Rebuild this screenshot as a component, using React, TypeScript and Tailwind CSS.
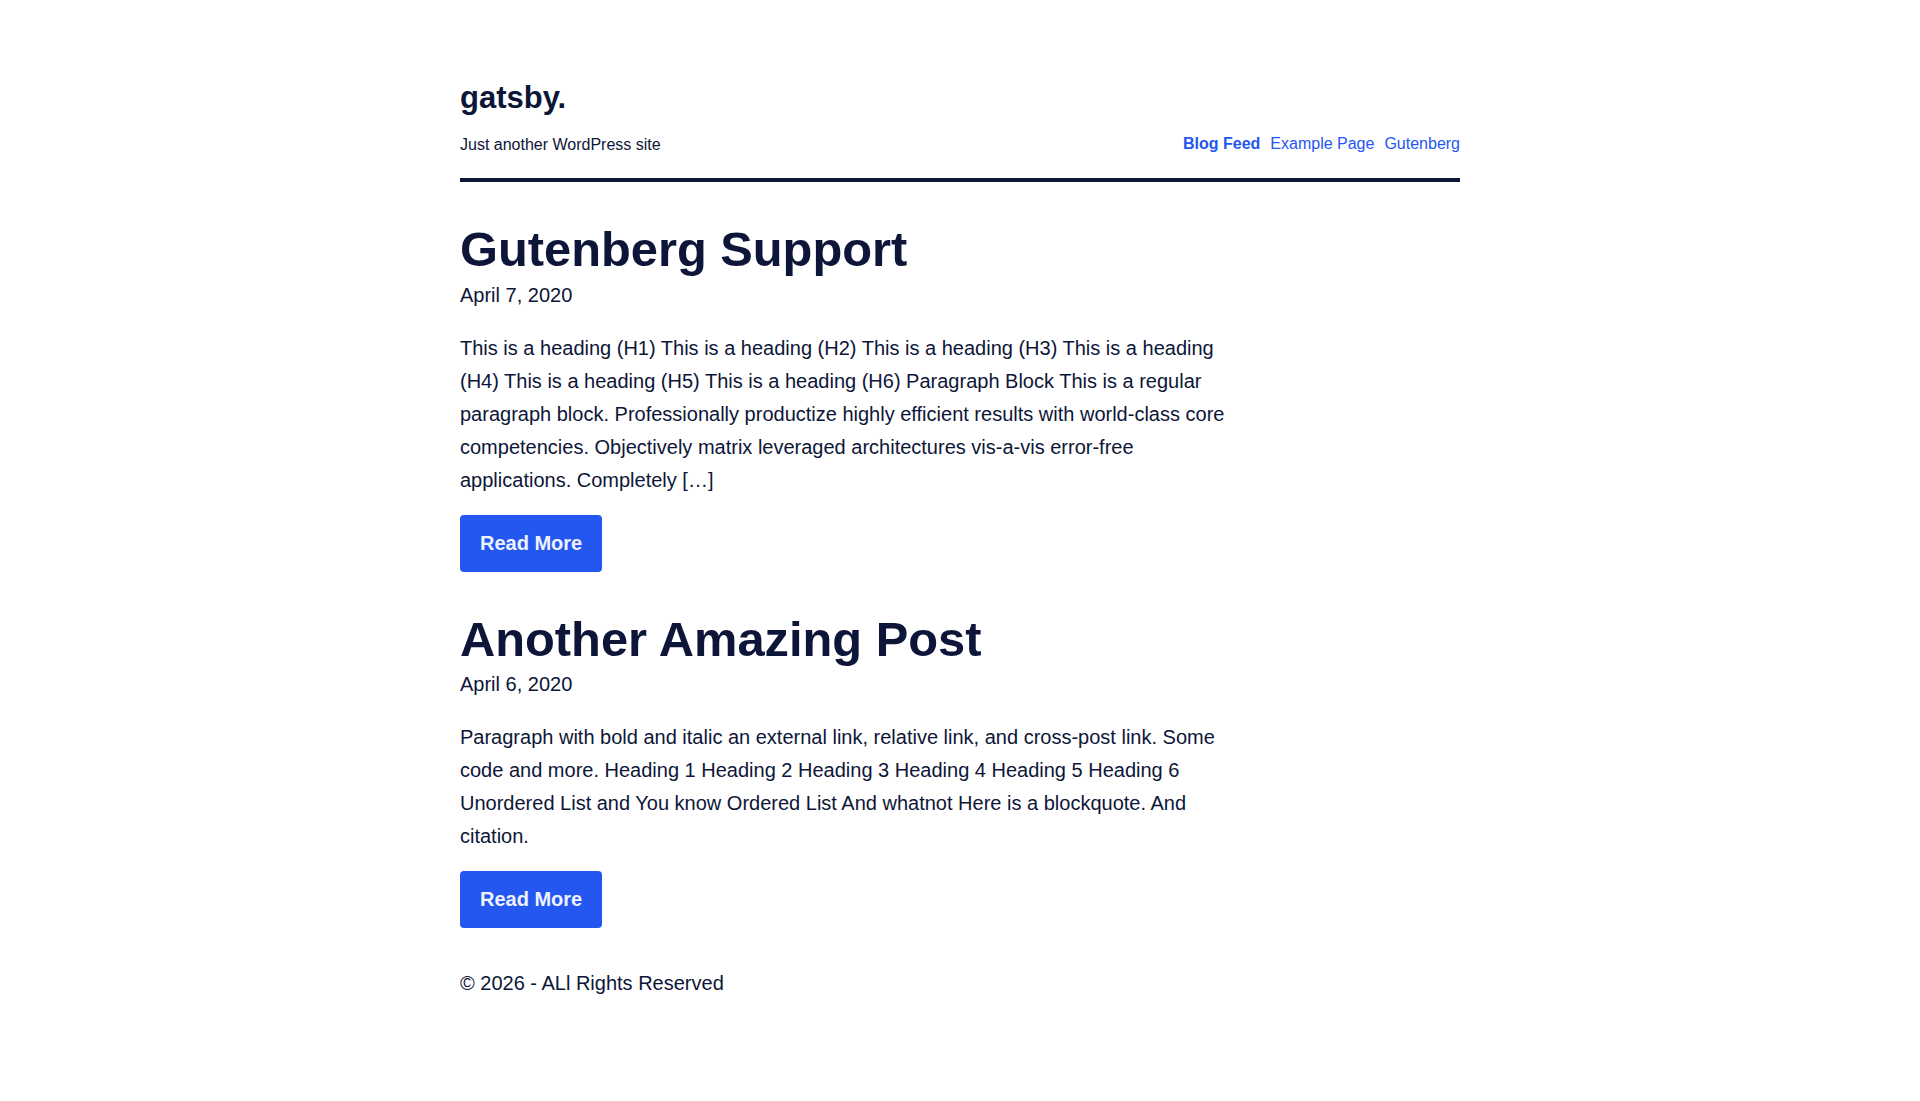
import React from 'react'

// Simple Gatsby + WordPress starter blog index

interface Post {
  title: string
  date: string
  excerpt: string
}

const posts: Post[] = [
  {
    title: 'Gutenberg Support',
    date: 'April 7, 2020',
    excerpt:
      'This is a heading (H1) This is a heading (H2) This is a heading (H3) This is a heading (H4) This is a heading (H5) This is a heading (H6) Paragraph Block This is a regular paragraph block. Professionally productize highly efficient results with world-class core competencies. Objectively matrix leveraged architectures vis-a-vis error-free applications. Completely […]',
  },
  {
    title: 'Another Amazing Post',
    date: 'April 6, 2020',
    excerpt:
      'Paragraph with bold and italic an external link, relative link, and cross-post link. Some code and more. Heading 1 Heading 2 Heading 3 Heading 4 Heading 5 Heading 6 Unordered List and You know Ordered List And whatnot Here is a blockquote. And citation.',
  },
]

const navItems = [
  { label: 'Blog Feed', active: true },
  { label: 'Example Page', active: false },
  { label: 'Gutenberg', active: false },
]

export default function App() {
  return (
    <div className="min-h-screen bg-white font-['Liberation_Sans',Arial,sans-serif] text-[#0d1638]">
      <div className="mx-auto w-[1000px] pt-[80px] pb-16">

        {/* ── Header ─────────────────────────────────────────── */}
        <header className="flex items-end justify-between border-b-4 border-[#0d1638] pb-[21px]">
          <div>
            <a href="#" className="block text-[31px] font-bold leading-[36px]">gatsby.</a>
            <p className="mt-[17px] text-base leading-6">Just another WordPress site</p>
          </div>
          <nav className="mb-[1px] flex gap-[10px] text-base leading-6">
            {navItems.map(item => (
              <a
                key={item.label}
                href="#"
                className={item.active ? 'font-bold text-[#2457f0]' : 'text-[#2457f0]'}
              >
                {item.label}
              </a>
            ))}
          </nav>
        </header>

        {/* ── Posts ──────────────────────────────────────────── */}
        <main>
          {posts.map(post => (
            <article key={post.title} className="mt-[39px]">
              <h2 className="text-[48.8px] font-bold leading-[57.6px]">
                <a href="#">{post.title}</a>
              </h2>
              <p className="mt-[1px] text-[20px] leading-[30px]">{post.date}</p>
              <p className="mt-[22px] max-w-[780px] text-[20px] leading-[33px]">{post.excerpt}</p>
              <a
                href="#"
                className="mt-[18px] inline-block rounded bg-[#2457f0] px-5 py-4 text-[20px] font-bold leading-[25px] text-[#eef2ff]"
              >
                Read More
              </a>
            </article>
          ))}
        </main>

        {/* ── Footer ─────────────────────────────────────────── */}
        <footer className="mt-[40px] text-[20px] leading-[30px]">
          © 2026 - ALl Rights Reserved
        </footer>
      </div>
    </div>
  )
}
